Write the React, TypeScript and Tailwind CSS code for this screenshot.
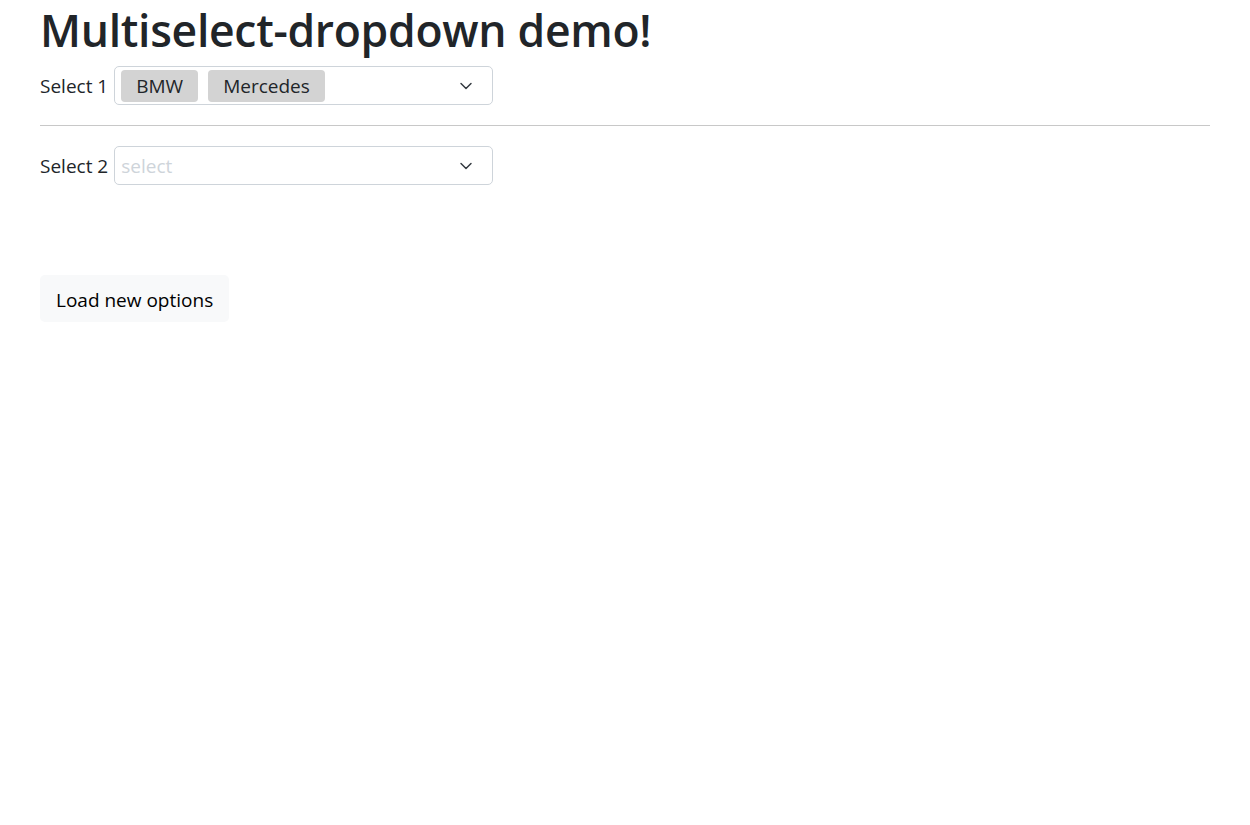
import { ChevronDown } from 'lucide-react'

const font = { fontFamily: '"Open Sans", "Noto Sans", sans-serif' }

function Tag({ label }: { label: string }) {
  return (
    <span className="inline-flex items-center h-[32px] px-[15px] pt-[2px] rounded-[4px] bg-[#d3d3d3] text-[19px] text-[#212529]">
      {label}
    </span>
  )
}

function MultiSelect({ tags, placeholder }: { tags?: string[]; placeholder?: string }) {
  return (
    <div className="flex items-center w-[379px] h-[39px] border border-[#ced4da] rounded-[5px] pl-[6px] pr-[16px] gap-[10px]">
      {tags && tags.length > 0 ? (
        tags.map((t) => <Tag key={t} label={t} />)
      ) : (
        <span className="pt-[2px] text-[19px] text-[#ced4da]">{placeholder}</span>
      )}
      <ChevronDown className="ml-auto w-[20px] h-[20px] text-[#343a40]" strokeWidth={1.75} />
    </div>
  )
}

export default function App() {
  return (
    <div className="min-h-[825px] bg-white px-[40px] text-[#212529]" style={font}>
      <h1 className="text-[44.5px] font-semibold leading-[60px] tracking-[-0.3px]">Multiselect-dropdown demo!</h1>
      <div className="flex items-center gap-[6px] mt-[6px]">
        <span className="pt-[2px] text-[19px]">Select 1</span>
        <MultiSelect tags={['BMW', 'Mercedes']} />
      </div>
      <hr className="my-[20px] border-t border-[#c8c8c8]" />
      <div className="flex items-center gap-[6px]">
        <span className="pt-[2px] text-[19px]">Select 2</span>
        <MultiSelect placeholder="select" />
      </div>
      <button className="mt-[90px] h-[47px] px-[16px] pt-[3px] rounded-[5px] bg-[#f8f9fa] text-[19px] text-black">
        Load new options
      </button>
    </div>
  )
}
